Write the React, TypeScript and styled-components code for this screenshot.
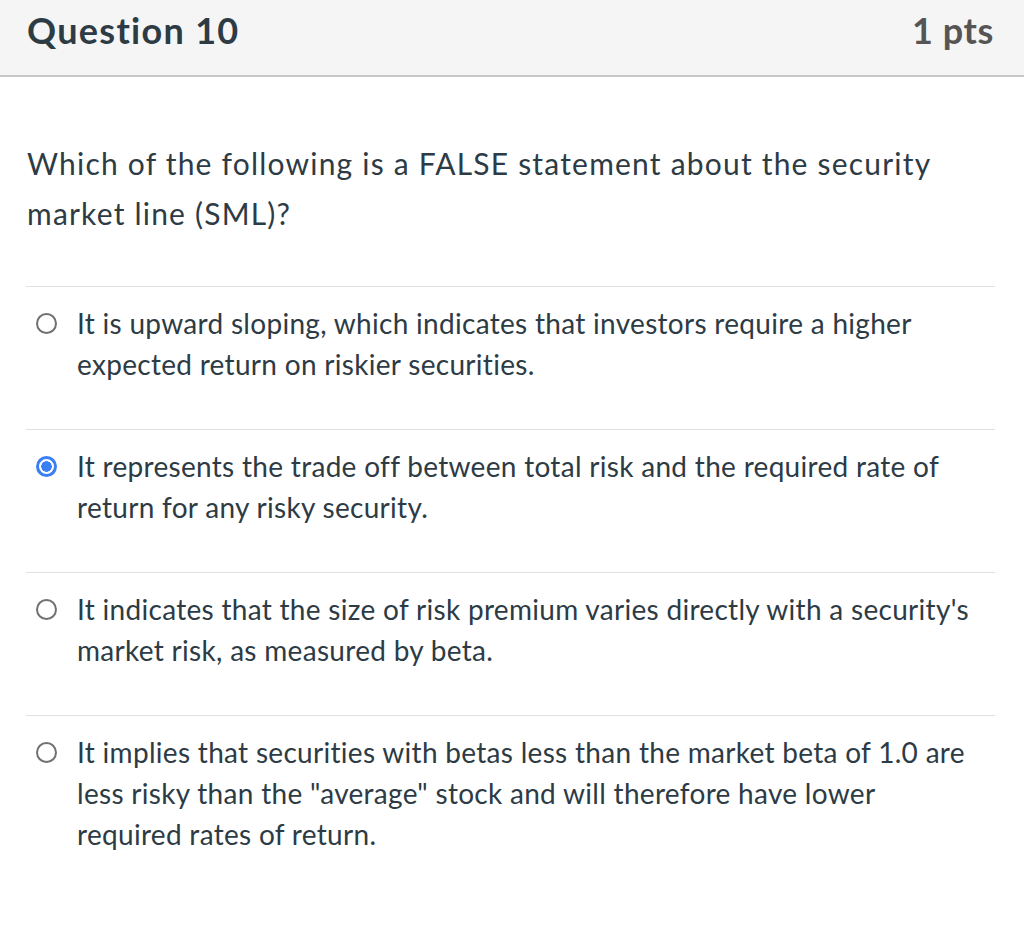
import styled, { createGlobalStyle } from 'styled-components';

const GlobalStyle = createGlobalStyle`
  body {
    margin: 0;
    background: #fff;
    font-family: Lato, "Noto Sans", sans-serif;
    color: #2d3b45;
  }
`;

type Answer = {
  id: number;
  text: string;
  selected?: boolean;
};

const answers: Answer[] = [
  {
    id: 1,
    text: 'It is upward sloping, which indicates that investors require a higher expected return on riskier securities.',
  },
  {
    id: 2,
    text: 'It represents the trade off between total risk and the required rate of return for any risky security.',
    selected: true,
  },
  {
    id: 3,
    text: "It indicates that the size of risk premium varies directly with a security's market risk, as measured by beta.",
  },
  {
    id: 4,
    text: 'It implies that securities with betas less than the market beta of 1.0 are less risky than the "average" stock and will therefore have lower required rates of return.',
  },
];

const App = () => {
  return (
    <>
      <GlobalStyle />
      <Header>
        <Title>Question 10</Title>
        <Points>1 pts</Points>
      </Header>
      <Content>
        <QuestionText>
          Which of the following is a FALSE statement about the security market line (SML)?
        </QuestionText>
        <AnswerList>
          {answers.map((answer) => (
            <AnswerItem key={answer.id}>
              <Radio $selected={!!answer.selected} />
              <AnswerText>{answer.text}</AnswerText>
            </AnswerItem>
          ))}
        </AnswerList>
      </Content>
    </>
  );
};

export default App;

const Header = styled.header`
  display: flex;
  justify-content: space-between;
  align-items: flex-start;
  height: 77px;
  box-sizing: border-box;
  padding: 6px 30px 0 27px;
  background: #f5f5f5;
  border-bottom: 2px solid #c7c7c7;
`;

const Title = styled.h2`
  margin: 0;
  font-size: 36px;
  line-height: 48px;
  font-weight: 700;
  letter-spacing: 1.3px;
  color: #2d3b45;
`;

const Points = styled.div`
  font-size: 36px;
  line-height: 48px;
  font-weight: 700;
  letter-spacing: 0.6px;
  color: #555;
`;

const Content = styled.main`
  padding: 0 29px 0 26px;
`;

const QuestionText = styled.p`
  margin: 0;
  padding: 61px 0 48px 1px;
  font-size: 30px;
  line-height: 50px;
  letter-spacing: 1.2px;
`;

const AnswerList = styled.ul`
  list-style: none;
  margin: 0;
  padding: 0;
`;

const AnswerItem = styled.li`
  display: flex;
  align-items: flex-start;
  gap: 20px;
  padding: 16px 22px 44px 10px;
  border-top: 1px solid #e0e0e0;
`;

const Radio = styled.span<{ $selected: boolean }>`
  flex: none;
  width: 21px;
  height: 21px;
  margin-top: 10px;
  box-sizing: border-box;
  border-radius: 50%;
  border: ${({ $selected }) => ($selected ? '3px solid #3a7ff6' : '2px solid #707070')};
  background: ${({ $selected }) =>
    $selected ? 'radial-gradient(circle, #3a7ff6 0 5px, #fff 5.5px)' : '#fff'};
`;

const AnswerText = styled.span`
  font-size: 28px;
  line-height: 41px;
  letter-spacing: 0.3px;
`;
